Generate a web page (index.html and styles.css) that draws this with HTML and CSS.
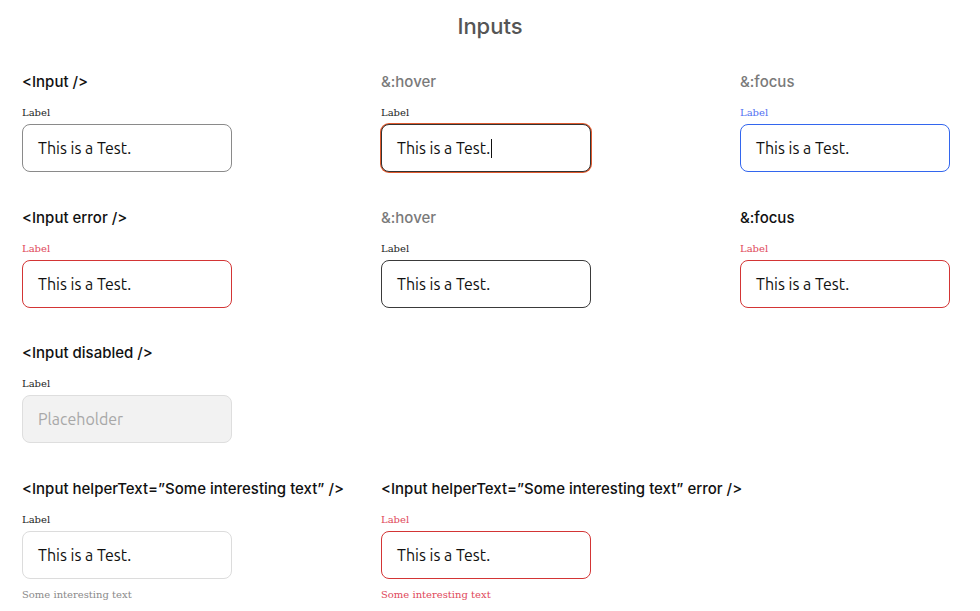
FILE: index.html
```html
<!DOCTYPE html>
<html>
<head>
<meta charset="utf-8">
<title>Inputs</title>
<link rel="stylesheet" href="styles.css">
</head>
<body>
<h1 class="title">Inputs</h1>
<div class="grid">
  <div class="field">
    <div class="heading">&lt;Input /&gt;</div>
    <div class="label">Label</div>
    <div class="box">This is a Test.</div>
  </div>
  <div class="field">
    <div class="heading muted">&amp;:hover</div>
    <div class="label">Label</div>
    <div class="box hover">This is a Test.<span class="caret"></span></div>
  </div>
  <div class="field">
    <div class="heading muted">&amp;:focus</div>
    <div class="label focus">Label</div>
    <div class="box focus">This is a Test.</div>
  </div>

  <div class="field">
    <div class="heading">&lt;Input error /&gt;</div>
    <div class="label error">Label</div>
    <div class="box error">This is a Test.</div>
  </div>
  <div class="field">
    <div class="heading muted">&amp;:hover</div>
    <div class="label">Label</div>
    <div class="box error-hover">This is a Test.</div>
  </div>
  <div class="field">
    <div class="heading">&amp;:focus</div>
    <div class="label error">Label</div>
    <div class="box error">This is a Test.</div>
  </div>

  <div class="field">
    <div class="heading">&lt;Input disabled /&gt;</div>
    <div class="label">Label</div>
    <div class="box disabled">Placeholder</div>
  </div>
  <div class="field"></div>
  <div class="field"></div>

  <div class="field">
    <div class="heading">&lt;Input helperText=”Some interesting text” /&gt;</div>
    <div class="label">Label</div>
    <div class="box light">This is a Test.</div>
    <div class="helper">Some interesting text</div>
  </div>
  <div class="field">
    <div class="heading">&lt;Input helperText=”Some interesting text” error /&gt;</div>
    <div class="label error">Label</div>
    <div class="box error">This is a Test.</div>
    <div class="helper error">Some interesting text</div>
  </div>
  <div class="field"></div>
</div>
</body>
</html>
```

FILE: styles.css
```css
html, body {
  margin: 0;
  padding: 0;
  background: #ffffff;
}

body {
  font-family: "Inter", "Open Sans", sans-serif;
  color: #111;
}

.title {
  margin: 11px 0 0;
  text-align: center;
  font-family: "Inter", sans-serif;
  font-weight: 500;
  font-size: 22px;
  line-height: 30px;
  color: #555;
}

.grid {
  display: grid;
  grid-template-columns: 359px 359px 1fr;
  row-gap: 35.7px;
  padding: 31px 22px 0;
}

.field {
  display: flex;
  flex-direction: column;
  align-items: flex-start;
}

.heading {
  font-family: "Inter", sans-serif;
  font-weight: 500;
  font-size: 15px;
  line-height: 20px;
  color: #111;
  white-space: nowrap;
}

.heading.muted {
  color: #7a7a7a;
}

.label {
  margin-top: 14px;
  font-family: "DejaVu Serif", serif;
  font-size: 10px;
  line-height: 14px;
  color: #222;
}

.label.focus {
  color: #5270f2;
}

.label.error {
  color: #e0485a;
}

.box {
  margin-top: 4px;
  box-sizing: border-box;
  width: 210px;
  height: 48px;
  padding: 0 15px;
  display: flex;
  align-items: center;
  border: 1px solid #8a8a8a;
  border-radius: 8px;
  font-family: "Ubuntu", "Noto Sans", sans-serif;
  font-size: 16px;
  color: #111;
  background: #fff;
}

.box.hover {
  border-color: #333;
  box-shadow: 0 0 0 1px #e05a2e;
}

.caret {
  display: inline-block;
  width: 1px;
  height: 19px;
  margin-left: 1px;
  background: #111;
}

.box.focus {
  border-color: #3366ee;
}

.box.error {
  border-color: #d33535;
}

.box.error-hover {
  border-color: #3a3a3a;
}

.box.disabled {
  background: #f2f2f2;
  border-color: #dedede;
  color: #a8a8a8;
}

.box.light {
  border-color: #dcdcdc;
}

.helper {
  margin-top: 9px;
  font-family: "DejaVu Serif", serif;
  font-size: 10px;
  line-height: 14px;
  color: #8a8a8a;
}

.helper.error {
  color: #e0485a;
}
```
